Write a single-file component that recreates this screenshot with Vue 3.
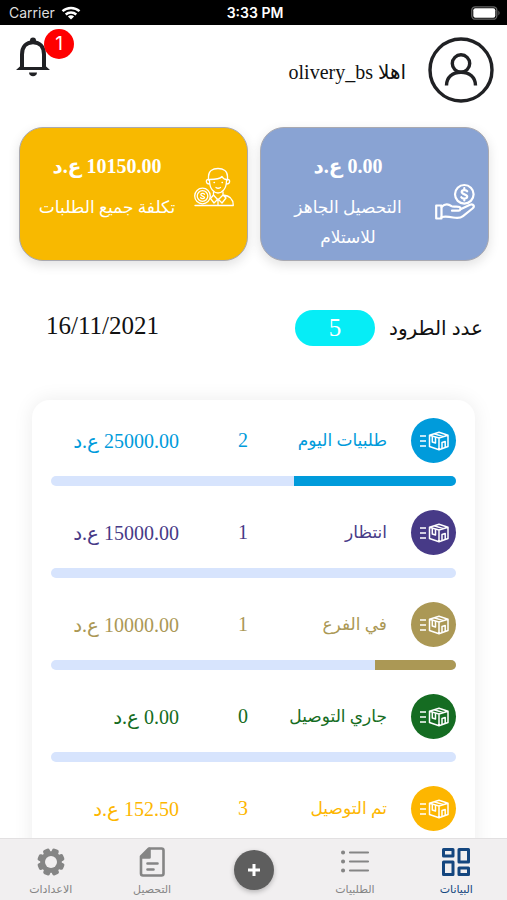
<script setup>
const cards = [
  { id: 'ready', amount: '0.00', label: 'التحصيل الجاهز للاستلام', icon: 'hand' },
  { id: 'total', amount: '10150.00', label: 'تكلفة جميع الطلبات', icon: 'agent' },
];

const parcelCount = 5;
const today = '16/11/2021';

const statuses = [
  { label: 'طلبيات اليوم', count: 2, amount: '25000.00', color: '#009bdb', percent: 40 },
  { label: 'انتظار', count: 1, amount: '15000.00', color: '#473a87', percent: 0 },
  { label: 'في الفرع', count: 1, amount: '10000.00', color: '#ab9855', percent: 20 },
  { label: 'جاري التوصيل', count: 0, amount: '0.00', color: '#156c22', percent: 0 },
  { label: 'تم التوصيل', count: 3, amount: '152.50', color: '#fdb600', percent: 60 },
];
</script>

<template>
  <div class="app" dir="rtl" lang="ar">
    <div class="status-bar" dir="ltr">
      <div class="status-bar__carrier">
        <span>Carrier</span>
        <svg width="20" height="14" viewBox="0 0 20 14" fill="none" stroke="#fff" stroke-width="2.4">
          <path d="M1.5 5.2C6.2.9 13.8.9 18.5 5.2" />
          <path d="M4.7 8.5C7.7 5.9 12.3 5.9 15.3 8.5" />
          <path d="M10 13.5 6.9 10.4C8.7 8.9 11.3 8.9 13.1 10.4Z" fill="#fff" stroke="none" />
        </svg>
      </div>
      <span class="status-bar__time">3:33 PM</span>
      <svg class="status-bar__battery" width="30" height="14" viewBox="0 0 30 14">
        <rect x=".8" y=".8" width="25" height="12.4" rx="3.5" fill="none" stroke="#666" stroke-width="1.3" />
        <rect x="2.3" y="2.3" width="22" height="9.4" rx="2" fill="#fff" />
        <path d="M27.5 4.5Q29.5 7 27.5 9.5Z" fill="#777" />
      </svg>
    </div>

    <main class="content">
      <header class="header">
        <svg class="header__avatar" viewBox="0 0 66 66" fill="none" stroke="#202124" stroke-width="3.4">
          <circle cx="33" cy="33" r="31" />
          <circle cx="33" cy="26.5" r="8.7" />
          <path d="M18.5 48.5C18.5 40 24.5 35.2 33 35.2S47.500 40 47.500 48.500" />
        </svg>
        <p class="header__greeting">اهلا olivery_bs</p>
        <button class="bell" type="button" aria-label="الاشعارات">
          <svg width="34" height="40" viewBox="0 0 34 40">
            <circle cx="17" cy="3.5" r="3" fill="#202124" />
            <path d="M6 32V17.5C6 9.5 10.5 5.2 17 5.2S28 9.5 28 17.5V32" fill="none" stroke="#202124" stroke-width="4" />
            <path d="M0 33 5 28.5V30H29V28.5L34 33Z" fill="#202124" />
            <path d="M13 35.5H21C21 40.5 13 40.5 13 35.5Z" fill="#202124" />
          </svg>
          <span class="bell__badge">1</span>
        </button>
      </header>

      <section class="cards">
        <article v-for="card in cards" :key="card.id" class="card" :class="`card--${card.id}`">
          <svg v-if="card.icon === 'hand'" class="card__icon" viewBox="0 0 40 40" fill="none" stroke="#fff" stroke-width="2.2" stroke-linejoin="round" stroke-linecap="round">
            <circle cx="29.3" cy="12.3" r="9.3" />
            <path d="M32.2 9.3C31.5 7.8 26.7 7.5 26.7 10.1S32.2 12 32.2 14.6 27.3 17.1 26.3 15.2M29.3 6.2V8M29.3 16.8V18.5" />
            <path d="M1.2 23.5H6.5V36.5H1.2Z" />
            <path d="M6.500 25C10 21.500 13.500 22 16.500 24.200 18 25.200 22.500 24 24.500 25 26.500 26.100 25.500 28.700 23.500 28.700H17" />
            <path d="M25.5 27.2 35 22.8C38.5 21.5 40 24.5 37.5 26.5L28 34.2C25 36.6 21.5 36.2 18 35.5 14 34.7 11 34.3 6.5 35" />
          </svg>
          <svg v-else class="card__icon" viewBox="0 0 40 40" fill="none" stroke="#fff" stroke-width="1.3" stroke-linejoin="round" stroke-linecap="round">
            <path d="M14.5 13V9.5C14.5 4.3 18.5 1.5 24 1.5S33.5 4.3 33.5 9.5V13" />
            <path d="M15.5 13.5C15.5 22 20 26 24 26S32.5 22 32.5 13.5M14.5 12.5C11.5 12 11.5 17 15.5 17M33.5 12.5C36.5 12 36.5 17 32.5 17" />
            <path d="M15.5 12.500C20 12.500 26 12 28 9.500 29 11.500 31 12.500 32.500 12.500M22 20.500Q24 22 26.500 20.500M20 15.500H20.500M28 15.500H28.500" />
            <path d="M19.5 25V28L24 33 29 28V25M19.5 28 16.5 31.5 20 36 24 32 28 36 32 31 29 28C35 28.5 39.3 31 39.3 38.5H1M24 33V38" />
            <circle cx="8.5" cy="29" r="7.8" />
            <circle cx="8.5" cy="29" r="5.3" />
            <path d="M10.5 27.2C9.5 26 6.8 26.3 6.8 27.7S10.5 29 10.5 30.5 7.5 32 6.5 30.7" />
          </svg>
          <div class="card__text">
            <strong class="card__amount">{{ card.amount }} ع.د</strong>
            <p class="card__label">{{ card.label }}</p>
          </div>
        </article>
      </section>

      <section class="summary">
        <h2>عدد الطرود</h2>
        <span class="summary__count">{{ parcelCount }}</span>
        <time class="summary__date" datetime="2021-11-16">{{ today }}</time>
      </section>

      <ul class="statuses">
        <li v-for="item in statuses" :key="item.label" class="status" :style="{ '--color': item.color }">
          <div class="status__row">
            <span class="status__icon">
              <svg width="30" height="20" viewBox="0 0 30 20" fill="none" stroke="#fff" stroke-width="1.5" stroke-linejoin="round">
                <path d="M1 5H7M1 10H7M1 15H7" />
                <path d="M10.5 4.2 20 1.2 29 4.2V15.5L20 18.8 10.5 15.5ZM10.5 4.2 20 7 29 4.200M20 7V18.800M15 2.700 24.500 5.600" />
                <path d="M13.3 5.2V11L16.500 12V6.200M23 17V11.500L26.200 10.500V16" />
              </svg>
            </span>
            <span class="status__label">{{ item.label }}</span>
            <span class="status__count">{{ item.count }}</span>
            <span class="status__amount">{{ item.amount }} ع.د</span>
          </div>
          <div class="status__track">
            <div class="status__bar" :style="{ width: `${item.percent}%` }"></div>
          </div>
        </li>
      </ul>
    </main>

    <nav class="tabs">
      <a class="tab is-active" href="#dashboard">
        <svg width="30" height="30" viewBox="0 0 30 30" fill="none" stroke="currentColor" stroke-width="3" stroke-linejoin="round">
          <rect x="2.5" y="2.5" width="9.5" height="6.5" />
          <rect x="18" y="2.5" width="9.5" height="12.5" />
          <rect x="2.5" y="15" width="9.5" height="12.5" />
          <rect x="18" y="21" width="9.5" height="6.5" />
        </svg>
        <span>البيانات</span>
      </a>
      <a class="tab" href="#orders">
        <svg width="30" height="30" viewBox="0 0 30 30" fill="none" stroke="currentColor" stroke-width="2.2" stroke-linecap="round">
          <path d="M10 5.5H28M10 14.5H28M10 23.5H28" />
          <path d="M3 5.5H3.1M3 14.5H3.1M3 23.5H3.1" stroke-width="4" />
        </svg>
        <span>الطلبيات</span>
      </a>
      <button class="tab-add" type="button" aria-label="اضافة">
        <svg width="14" height="14" viewBox="0 0 14 14" stroke="#fff" stroke-width="3">
          <path d="M7 1V13M1 7H13" />
        </svg>
      </button>
      <a class="tab" href="#collection">
        <svg width="30" height="30" viewBox="0 0 30 30" fill="none" stroke="currentColor" stroke-width="2.6" stroke-linejoin="round" stroke-linecap="round">
          <path d="M12 1.5H24.5Q26.5 1.5 26.5 3.5V26.5Q26.5 28.5 24.5 28.5H6Q4 28.5 4 26.5V9.5Z" />
          <path d="M12.5 2V10.5H4.5Z" fill="currentColor" />
          <path d="M10.5 16.5H20.5M10.5 22.5H16.5" />
        </svg>
        <span>التحصيل</span>
      </a>
      <a class="tab" href="#settings">
        <svg width="30" height="30" viewBox="0 0 30 30">
          <g fill="currentColor">
            <rect v-for="n in 4" :key="n" x="11.5" y="1.3" width="7" height="27.4" rx="2" :transform="`rotate(${n * 45 + 22} 15 15)`" />
          </g>
          <circle cx="15" cy="15" r="8.3" fill="none" stroke="currentColor" stroke-width="5" />
          <circle cx="15" cy="15" r="6" fill="#f1eff0" />
        </svg>
        <span>الاعدادات</span>
      </a>
    </nav>
  </div>
</template>

<style>
body {
  margin: 0;
  background: #fff;
}
</style>

<style scoped>
.app {
  height: 100vh;
  display: flex;
  flex-direction: column;
  overflow: hidden;
  background: #fff;
  color: #111;
  font-family: 'Liberation Serif', 'DejaVu Sans', serif;
}

.status-bar {
  display: grid;
  grid-template-columns: 1fr auto 1fr;
  align-items: center;
  flex: none;
  height: 25px;
  padding: 0 6px 0 9px;
  background: #000;
  color: #fff;
  font: 14px/25px Inter, sans-serif;
}

.status-bar__carrier {
  display: flex;
  align-items: center;
  gap: 6px;
  color: #ddd;
}

.status-bar__time {
  font-weight: 600;
}

.status-bar__battery {
  justify-self: end;
}

.content {
  flex: 1;
  min-height: 0;
  overflow-y: auto;
  scrollbar-width: none;
}

.header {
  display: flex;
  align-items: center;
  padding: 12px 13px 0 16px;
}

.header__avatar {
  flex: none;
  width: 66px;
  height: 66px;
}

.header__greeting {
  flex: 1;
  margin: 4px 22px 0;
  font-size: 20px;
  line-height: 30px;
}

.bell {
  position: relative;
  align-self: flex-start;
  padding: 0;
  border: 0;
  background: none;
}

.bell svg {
  display: block;
}

.bell__badge {
  position: absolute;
  top: -8px;
  left: 28px;
  width: 30px;
  height: 30px;
  border-radius: 50%;
  background: #f00;
  color: #fff;
  font: 19px/30px Inter, sans-serif;
}

.cards {
  display: grid;
  grid-template-columns: 1fr 1fr;
  gap: 12px;
  padding: 24px 18px 0 19px;
}

.card {
  box-sizing: border-box;
  display: flex;
  align-items: center;
  align-self: start;
  min-height: 134px;
  padding: 23px 13px 7px 0;
  border: 1px solid #a9a9b0;
  border-radius: 24px;
  box-shadow: 0 4px 12px rgba(0, 0, 0, 0.12);
  color: #fff;
}

.card--ready {
  background: #89a3d3;
}

.card--total {
  align-items: flex-start;
  background: #f8b900;
}

.card__icon {
  flex: none;
  width: 40px;
  height: 40px;
}

.card--total .card__icon {
  margin-top: 16px;
}

.card__text {
  flex: 1;
  padding: 0 16px;
  text-align: center;
}

.card__amount {
  display: block;
  font-size: 20px;
  line-height: 30px;
}

.card__label {
  margin: 12px 0 0;
  font-size: 17px;
  line-height: 30px;
}

.summary {
  display: flex;
  align-items: center;
  padding: 49px 24px 0 46px;
}

.summary h2 {
  margin: 0;
  font-size: 20px;
  font-weight: 400;
}

.summary__count {
  width: 80px;
  margin-inline-start: 14px;
  border-radius: 18px;
  background: #06edf6;
  color: #fff;
  font-size: 25px;
  line-height: 36px;
  text-align: center;
}

.summary__date {
  margin-inline-start: auto;
  font-size: 25px;
  line-height: 32px;
  align-self: flex-start;
}

.statuses {
  display: grid;
  gap: 24px;
  margin: 54px 32px 0;
  padding: 18px 19px 24px;
  border-radius: 18px;
  box-shadow: 0 0 20px rgba(0, 0, 0, 0.08);
  list-style: none;
}

.status {
  display: grid;
  gap: 13px;
  color: var(--color);
}

.status__row {
  display: grid;
  grid-template-columns: 45px 16fr 10fr 19fr;
  align-items: center;
  font-size: 20px;
  white-space: nowrap;
}

.status__icon {
  display: grid;
  place-items: center;
  height: 45px;
  border-radius: 50%;
  background: var(--color);
}

.status__label {
  padding-inline-start: 24px;
  font-size: 17px;
}

.status__count {
  text-align: center;
}

.status__amount {
  padding-inline-start: 24px;
}

.status__track {
  height: 10px;
  border-radius: 5px;
  overflow: hidden;
  background: #d7e4fd;
}

.status__bar {
  height: 100%;
  background: var(--color);
}

.tabs {
  display: grid;
  grid-template-columns: repeat(5, 1fr);
  flex: none;
  height: 61px;
  border-top: 1px solid #e2e0e1;
  background: #f1eff0;
}

.tab {
  display: flex;
  flex-direction: column;
  align-items: center;
  gap: 2px;
  padding-top: 8px;
  color: #858585;
  font-size: 11px;
  line-height: 20px;
  text-decoration: none;
}

.tab.is-active {
  color: #14467f;
}

.tab-add {
  display: grid;
  place-items: center;
  place-self: center;
  width: 40px;
  height: 40px;
  padding: 0;
  border: 0;
  border-radius: 50%;
  background: #5e5e5e;
  box-shadow: 0 2px 5px rgba(0, 0, 0, 0.25);
}
</style>
